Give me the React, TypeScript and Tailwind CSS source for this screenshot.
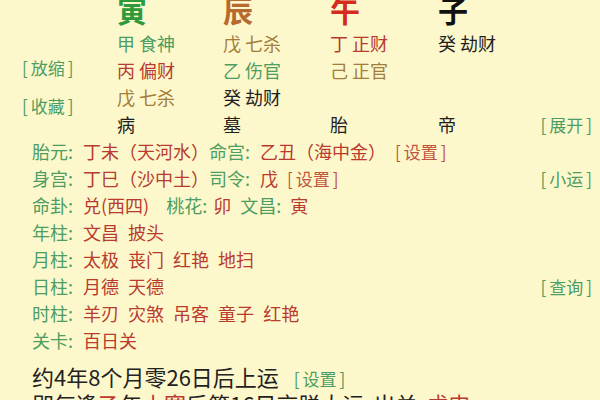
import React from 'react';

const C = {
  green: 'text-[#4c9d63]',
  red: 'text-[#b93a2e]',
  brown: 'text-[#a27d3c]',
  black: 'text-[#1f1f1f]',
};

type Cell = { stem: string; god: string; color: string } | null;

const pillars = [
  { big: '寅', bigColor: 'text-[#2f9a3c]' },
  { big: '辰', bigColor: 'text-[#b8692e]' },
  { big: '午', bigColor: 'text-[#d42a20]' },
  { big: '子', bigColor: 'text-[#111]' },
];

const hidden: Cell[][] = [
  [
    { stem: '甲', god: '食神', color: C.green },
    { stem: '戊', god: '七杀', color: C.brown },
    { stem: '丁', god: '正财', color: C.red },
    { stem: '癸', god: '劫财', color: C.black },
  ],
  [
    { stem: '丙', god: '偏财', color: C.red },
    { stem: '乙', god: '伤官', color: C.green },
    { stem: '己', god: '正官', color: C.brown },
    null,
  ],
  [
    { stem: '戊', god: '七杀', color: C.brown },
    { stem: '癸', god: '劫财', color: C.black },
    null,
    null,
  ],
];

const stages = ['病', '墓', '胎', '帝'];

// label with a colon that takes a fixed slot
const Label = ({ name, colon = 'w-[15px]', className = '' }: { name: string; colon?: string; className?: string }) => (
  <span className={`${C.green} ${className}`}>
    {name}
    <span className={`inline-block ${colon}`}>:</span>
  </span>
);
const Red = ({ children }: { children: React.ReactNode }) => (
  <span className={C.red}>{children}</span>
);
const Btn = ({ children, color = C.green }: { children: React.ReactNode; color?: string }) => (
  <span className={`${color} text-[17px] [word-spacing:0px]`}>
    [<span className="px-[3px]">{children}</span>]
  </span>
);

const cols = 'grid grid-cols-[106px_107px_108px_1fr]';

export default function App() {
  return (
    <div className="w-[600px] h-[400px] overflow-hidden bg-[#fdf8cb] font-['Noto_Sans_CJK_SC','Noto_Sans',sans-serif] text-[18px] leading-[27px] text-[#1f1f1f]">
      {/* pillars block */}
      <div className="flex -mt-[12px]">
        <div className="w-[117px] shrink-0 pl-[22px] pt-[66px] flex flex-col">
          <Btn>放缩</Btn>
          <div className="mt-[11px]">
            <Btn>收藏</Btn>
          </div>
        </div>
        <div className="flex-1 pr-[8px]">
          <div className={`${cols} h-[42px] leading-[42px]`}>
            {pillars.map((p) => (
              <span key={p.big} className={`${p.bigColor} text-[30px] font-bold`}>
                {p.big}
              </span>
            ))}
          </div>
          {hidden.map((row, i) => (
            <div key={i} className={`${cols} h-[27px]`}>
              {row.map((c, j) =>
                c ? (
                  <span key={j} className={c.color}>
                    {c.stem} {c.god}
                  </span>
                ) : (
                  <span key={j} />
                )
              )}
            </div>
          ))}
          <div className={`${cols} h-[27px]`}>
            {stages.slice(0, 3).map((s) => (
              <span key={s}>{s}</span>
            ))}
            <div className="flex justify-between">
              <span>{stages[3]}</span>
              <Btn>展开</Btn>
            </div>
          </div>
        </div>
      </div>

      {/* detail lines */}
      <div className="pl-[32px] pr-[8px] [word-spacing:5px] whitespace-nowrap">
        <div className="h-[27px]">
          <Label name="胎元" />
          <Red>丁未（天河水）</Red>
          <Label name="命宫" />
          <Red>乙丑（海中金）</Red> <Btn color="text-[#c2543f]">设置</Btn>
        </div>
        <div className="h-[27px] flex justify-between">
          <span>
            <Label name="身宫" />
            <Red>丁巳（沙中土）</Red>
            <Label name="司令" />
            <Red>戊</Red> <Btn color="text-[#c2543f]">设置</Btn>
          </span>
          <Btn>小运</Btn>
        </div>
        <div className="h-[27px]">
          <Label name="命卦" />
          <Red>兑(西四)</Red>
          <Label name="桃花" colon="w-[11px]" className="ml-[17px]" />
          <Red>卯</Red> <Label name="文昌" colon="w-[14px]" />
          <Red>寅</Red>
        </div>
        <div className="h-[27px]">
          <Label name="年柱" />
          <Red>文昌 披头</Red>
        </div>
        <div className="h-[27px]">
          <Label name="月柱" />
          <Red>太极 丧门 红艳 地扫</Red>
        </div>
        <div className="h-[27px] flex justify-between">
          <span>
            <Label name="日柱" />
            <Red>月德 天德</Red>
          </span>
          <Btn>查询</Btn>
        </div>
        <div className="h-[27px]">
          <Label name="时柱" />
          <Red>羊刃 灾煞 吊客 童子 红艳</Red>
        </div>
        <div className="h-[27px]">
          <Label name="关卡" />
          <Red>百日关</Red>
        </div>
        <div className="mt-[9px] h-[27px] text-[22px] leading-[27px] text-[#222] [word-spacing:10px]">
          约4年8个月零26日后上运 <Btn>设置</Btn>
        </div>
        <div className="h-[27px] text-[22px] leading-[27px] text-[#222] [word-spacing:4px]">
          即每逢<Red>乙</Red>年<Red>小寒</Red>后第16日交脱大运 出关 <Red>戊申</Red>
        </div>
      </div>
    </div>
  );
}
